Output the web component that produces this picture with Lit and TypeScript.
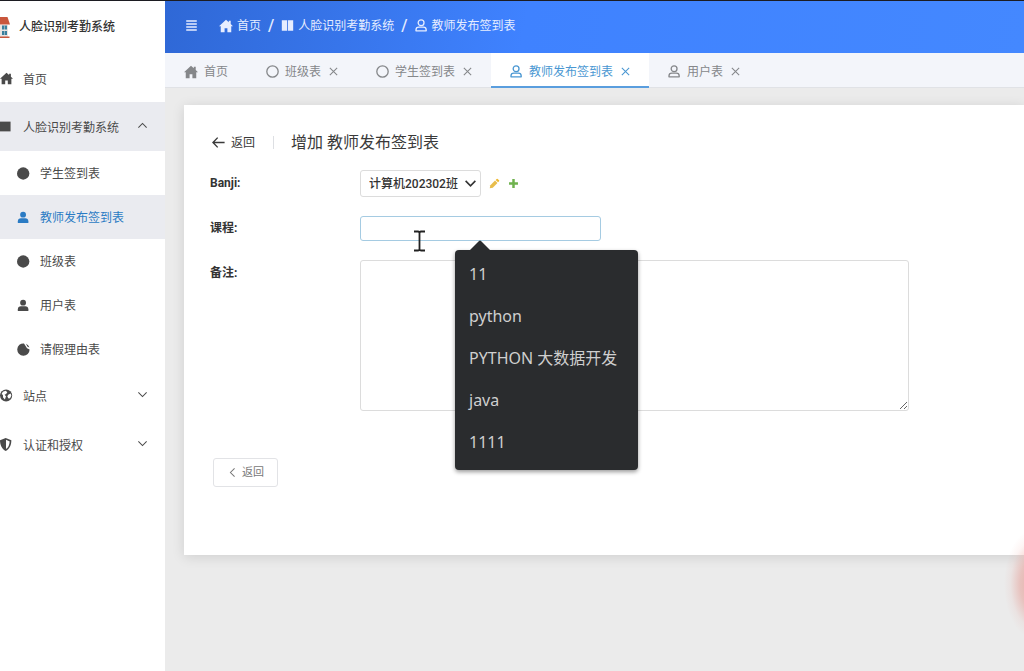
import { LitElement, html, css, svg } from "lit";
import { customElement, property, state } from "lit/decorators.js";
import { classMap } from "lit/directives/class-map.js";

const glyphs: Record<string, unknown> = {
  home: svg`<path d="M8 .8-.2 8.400H2V15.200h4.400v-4.600h3.200v4.600H14V8.400h2.200L13.400 5.800V2h-2.200v1.800z" fill="currentColor"/>`,
  square: svg`<path d="M0 2h13v12H0z" fill="currentColor"/>`,
  disc: svg`<circle cx="7.600" cy="8" r="7.600" fill="currentColor"/>`,
  ring: svg`<circle cx="8" cy="8" r="7" fill="none" stroke="currentColor" stroke-width="1.600"/>`,
  user: svg`<circle cx="7.500" cy="4.500" r="3.600" fill="currentColor"/><path d="M1 14.800v-2.200c0-2.100 1.600-3.600 3.800-3.600h5.400c2.200 0 3.800 1.500 3.800 3.600v2.200z" fill="currentColor"/>`,
  userLine: svg`<g fill="none" stroke="currentColor" stroke-width="1.600"><circle cx="7.500" cy="4.600" r="3.600"/><path d="M1.200 14.600v-1.200c0-2.100 1.500-3.400 3.500-3.400h5.600c2 0 3.500 1.300 3.500 3.400v1.200z" stroke-linejoin="round"/></g>`,
  cookie: svg`<path d="M8.600.5A7.600 7.600 0 1 0 15.500 8L12.300 6.500 11 4.300z" fill="currentColor"/><path d="M11 .8a8 8 0 0 1 4.300 4.600l-2.300-.7z" fill="currentColor"/>`,
  globe: svg`<circle cx="7.500" cy="8" r="7.500" fill="currentColor"/><path d="M3.500 3.500 7 2l2 2-1.500 2.200L5.600 7l1.800 1.800L6 13 3.800 10.600 3.600 7.500 2 6zM10 7l3-1.500 1 2.500-1.600 3.500-1.900.3L9 9.300z" fill="#fff"/>`,
  shield: svg`<path d="M7 0 0 2.800C0 8.800 2.500 13.500 7 16c4.500-2.500 7-7.200 7-13.200z" fill="currentColor"/><path d="M7.400 2.300v11.200c2.900-2 4.300-5.200 4.500-9.300z" fill="#fff"/>`,
  columns: svg`<path d="M1 1.500h6.500v13H1zM8.500 1.500H15v13H8.500z" fill="currentColor"/>`,
  menu: svg`<path d="M1.500 2.500h13M1.500 6.200h13M1.500 9.900h13M1.500 13.600h13" stroke="currentColor" stroke-width="1.700"/>`,
  close: svg`<path d="m1.500 1.500 13 13M14.500 1.500l-13 13" stroke="currentColor" stroke-width="1.900"/>`,
  up: svg`<path d="m2 11 6-6 6 6" fill="none" stroke="currentColor" stroke-width="1.500"/>`,
  down: svg`<path d="m2 5 6 6 6-6" fill="none" stroke="currentColor" stroke-width="1.500"/>`,
  select: svg`<path d="m2 4.800 6 6 6-6" fill="none" stroke="currentColor" stroke-width="2"/>`,
  prev: svg`<path d="m11 2-6 6 6 6" fill="none" stroke="currentColor" stroke-width="1.500"/>`,
  back: svg`<path d="M15.500 8H1.500M7 2 1.200 8 7 14" fill="none" stroke="currentColor" stroke-width="1.700"/>`,
  pencil: svg`<path d="m1 15 1-4.500 6.800-6.800 3.500 3.500L5.500 14z" fill="#e8bd4c"/><path d="m9.700 2.800 1.400-1.400q.8-.8 1.600 0l1.900 1.900q.8.800 0 1.600l-1.400 1.400z" fill="#efb930"/>`,
  plus: svg`<path d="M6.200 1.500h3.600v4.700h4.700v3.600H9.800v4.700H6.200V9.800H1.500V6.200h4.700z" fill="#6fb24e"/>`,
};

@customElement("ui-icon")
export class UiIcon extends LitElement {
  static styles = css`
    :host { display: block; flex: none; width: 13px; height: 13px; }
    svg { display: block; width: 100%; height: 100%; }
  `;
  @property() name = "home";
  render() {
    return html`<svg viewBox="0 0 16 16" aria-hidden="true">${glyphs[this.name]}</svg>`;
  }
}

@customElement("side-menu")
export class SideMenu extends LitElement {
  static styles = css`
    :host { display: block; background: #fff; color: #4a4a4a; overflow: hidden; }
    .brand { display: flex; align-items: center; gap: 9px; height: 52px; font-weight: 500; color: #333; }
    .logo { display: block; flex: none; width: 10px; height: 24px; }
    .item { display: flex; align-items: center; gap: 10px; height: 49px; box-sizing: border-box; padding-right: 17px; color: inherit; text-decoration: none; }
    .item.first { padding-top: 2px; }
    .item.open { background: #eaebf0; }
    .item.child { height: 44px; padding-left: 17px; }
    .item.current { background: #eaebf0; color: #2b7bc4; }
    .text { flex: 1; padding-top: 2px; white-space: nowrap; }
    .caret { width: 11px; height: 11px; margin-bottom: 2px; }
  `;
  private entries = [
    ["disc", "学生签到表"],
    ["user", "教师发布签到表"],
    ["disc", "班级表"],
    ["user", "用户表"],
    ["cookie", "请假理由表"],
  ];
  private row(icon: string, text: string, cls: Record<string, boolean> = {}, caret = "") {
    return html`<a href="#" class=${classMap({ item: true, ...cls })}>
      <ui-icon name=${icon}></ui-icon><span class="text">${text}</span>
      ${caret ? html`<ui-icon class="caret" name=${caret}></ui-icon>` : ""}
    </a>`;
  }
  render() {
    return html`
      <div class="brand">
        <svg class="logo" viewBox="0 0 10 24" aria-hidden="true">
          <path d="M0 10h8v12H0z" fill="#e9e4e1"/>
          <path d="M0 2h7.500l2.500 7.500H0z" fill="#c9563c"/>
          <path d="M2 10.500h5v4H2zM2 16h5v4H2z" fill="#3b7f9d"/>
          <path d="M4.500 10.500v10" stroke="#e9e4e1" stroke-width=".5"/>
          <path d="M0 21.500h9.500v1.500H0z" fill="#c9563c"/>
        </svg>
        <span>人脸识别考勤系统</span>
      </div>
      <nav>
        ${this.row("home", "首页", { first: true })}
        ${this.row("square", "人脸识别考勤系统", { open: true }, "up")}
        ${this.entries.map(([i, t]) => this.row(i, t, { child: true, current: t === "教师发布签到表" }))}
        ${this.row("globe", "站点", {}, "down")}
        ${this.row("shield", "认证和授权", {}, "down")}
      </nav>`;
  }
}

@customElement("tab-strip")
export class TabStrip extends LitElement {
  static styles = css`
    :host { display: flex; height: 35px; background: #f3f5fa; border-bottom: 1px solid #e0e2e6; box-sizing: border-box; color: #85878a; }
    .tab { display: flex; align-items: center; gap: 8px; padding: 2px 19px 0; height: 35px; box-sizing: border-box; white-space: nowrap; }
    .tab.current { background: #fff; color: #4a97d2; box-shadow: inset 0 -2px #5a9ede; }
    .name, .close { border: 0; padding: 0; background: none; font: inherit; color: inherit; display: flex; align-items: center; gap: 6px; }
    .name ui-icon[name="home"] { width: 14px; height: 14px; }
    .close ui-icon { width: 9px; height: 9px; }
  `;
  private tabs = [
    ["home", "首页"],
    ["ring", "班级表"],
    ["ring", "学生签到表"],
    ["userLine", "教师发布签到表"],
    ["userLine", "用户表"],
  ];
  @state() private current = 3;
  render() {
    return this.tabs.map(
      ([icon, text], i) => html`<div class=${classMap({ tab: true, current: i === this.current })}>
        <button class="name" @click=${() => (this.current = i)}><ui-icon name=${icon}></ui-icon>${text}</button>
        ${i ? html`<button class="close" aria-label="关闭"><ui-icon name="close"></ui-icon></button>` : ""}
      </div>`
    );
  }
}

@customElement("record-form")
export class RecordForm extends LitElement {
  static styles = css`
    :host { display: block; background: #fff; box-shadow: 0 2px 12px rgba(0, 0, 0, 0.12); padding: 24px 26px 68px; }
    .head { display: flex; align-items: center; height: 27px; color: #3a3a3a; }
    .back { display: flex; align-items: center; gap: 6px; padding: 0 18px 0 2px; border: 0; background: none; font: inherit; color: inherit; }
    .rule { width: 1px; height: 13px; background: #dddfe3; }
    .title { margin: 0 0 0 17px; font-size: 16px; font-weight: 400; line-height: 24px; }
    form { display: grid; gap: 18px; padding-top: 14px; }
    .row { display: grid; grid-template-columns: 150px minmax(0, 1fr); align-items: center; }
    .row.tall { align-items: start; }
    .label { font-weight: 700; line-height: 27px; color: #333; }
    .line { display: flex; align-items: center; gap: 8px; }
    .pick { display: grid; align-items: center; }
    .pick > * { grid-area: 1 / 1; }
    .pick ui-icon { justify-self: end; margin-right: 4px; pointer-events: none; color: #333; }
    select { appearance: none; width: 121px; height: 27px; padding: 0 18px 0 8px; border: 1px solid #dcdcdc; border-radius: 3px; background: #fff; font: inherit; font-weight: 500; color: #333; }
    .tool { border: 0; padding: 0; background: none; }
    .tool ui-icon { width: 11px; height: 11px; }
    .field { position: relative; width: 241px; max-width: 100%; height: 25px; }
    input { display: block; width: 100%; height: 25px; box-sizing: border-box; border: 1px solid #a5cbe2; border-radius: 3px; padding: 0 8px; font: inherit; outline: none; background: #fff; }
    textarea { display: block; width: 549px; max-width: 100%; height: 151px; box-sizing: border-box; border: 1px solid #dcdcdc; border-radius: 3px; padding: 6px 8px; font: inherit; background: #fff; }
    .menu { position: absolute; z-index: 2; left: 95px; top: 34px; width: 183px; box-sizing: border-box; margin: 0; padding: 3px 0 7px; list-style: none; border-radius: 4px; background: #2a2c2e; box-shadow: 0 2px 4px rgba(0, 0, 0, 0.4); color: #cfcfcf; font: 16px/42px "Noto Sans", "Noto Sans CJK SC", sans-serif; }
    .menu li { height: 42px; padding: 0 14px; white-space: nowrap; }
    .tip { position: absolute; left: 14px; top: -10px; width: 22px; height: 11px; }
    .caret { position: absolute; z-index: 3; left: 53px; top: 14px; width: 13px; height: 22px; }
    .actions { padding: 47px 3px 0; }
    .cancel { display: flex; align-items: center; justify-content: center; gap: 4px; width: 65px; height: 29px; border: 1px solid #e2e3e6; border-radius: 3px; background: #fff; color: #777; padding: 0; font: inherit; font-size: 11px; }
    .cancel ui-icon { width: 11px; height: 11px; }
  `;
  private history = ["11", "python", "PYTHON 大数据开发", "java", "1111"];
  render() {
    return html`
      <div class="head">
        <button class="back"><ui-icon name="back"></ui-icon>返回</button>
        <span class="rule"></span>
        <h1 class="title">增加 教师发布签到表</h1>
      </div>
      <form>
        <div class="row">
          <label class="label" for="banji">Banji:</label>
          <div class="line">
            <div class="pick">
              <select id="banji"><option>计算机202302班</option></select>
              <ui-icon name="select"></ui-icon>
            </div>
            <button type="button" class="tool" aria-label="修改"><ui-icon name="pencil"></ui-icon></button>
            <button type="button" class="tool" aria-label="增加"><ui-icon name="plus"></ui-icon></button>
          </div>
        </div>
        <div class="row">
          <label class="label" for="course">课程:</label>
          <div class="field">
            <input id="course" type="text" autocomplete="off" />
            <svg class="caret" viewBox="0 0 13 22" aria-hidden="true">
              <path d="M1 1.500h4q1.500 0 1.500 1.500 0-1.500 1.500-1.500h4M6.500 3v16M1 20.500h4q1.500 0 1.500-1.500 0 1.500 1.500 1.500h4" fill="none" stroke="#222" stroke-width="1.800"/>
            </svg>
            <ul class="menu" role="listbox" aria-label="课程">
              <svg class="tip" viewBox="0 0 22 11" aria-hidden="true"><path d="M0 11 10 1q1-1 2 0l10 10z" fill="#2a2c2e"/></svg>
              ${this.history.map((t) => html`<li role="option">${t}</li>`)}
            </ul>
          </div>
        </div>
        <div class="row tall">
          <label class="label" for="note">备注:</label>
          <textarea id="note"></textarea>
        </div>
      </form>
      <div class="actions"><button class="cancel"><ui-icon name="prev"></ui-icon>返回</button></div>`;
  }
}

@customElement("app-root")
export class AppRoot extends LitElement {
  static styles = css`
    :host { display: block; font: 12px/18px Roboto, "Noto Sans CJK SC", sans-serif; }
    .page { position: relative; display: grid; grid-template-columns: 165px minmax(0, 1fr); min-height: 100vh; box-sizing: border-box; border-top: 1px solid #1c1c22; background: #ebebeb; overflow: hidden; }
    .bar { display: flex; align-items: center; height: 52px; padding: 0 20px 3px; box-sizing: border-box; background: linear-gradient(100deg, #2f68d6, #3f82ff 42%, #4488ff); color: #e6edff; white-space: nowrap; }
    .toggle { border: 0; padding: 0; margin-right: 21px; background: none; color: inherit; }
    .crumbs { display: flex; align-items: center; gap: 7px; }
    .crumb { display: flex; align-items: center; gap: 4px; color: inherit; text-decoration: none; }
    .crumb ui-icon[name="home"] { width: 14px; height: 14px; }
    .slash { font-size: 16px; font-weight: 500; }
    .main { padding: 17px 0 24px 19px; }
    .glow { position: absolute; right: -44px; top: 527px; width: 64px; height: 112px; border-radius: 50%; background: radial-gradient(closest-side, rgba(222, 90, 75, 0.45), rgba(222, 90, 75, 0.28) 50%, rgba(222, 90, 75, 0.06) 80%, rgba(222, 90, 75, 0)); }
  `;
  render() {
    return html`
      <div class="page">
        <side-menu></side-menu>
        <div>
          <header class="bar">
            <button class="toggle" aria-label="菜单"><ui-icon name="menu"></ui-icon></button>
            <nav class="crumbs">
              <a class="crumb" href="#"><ui-icon name="home"></ui-icon>首页</a><span class="slash">/</span>
              <a class="crumb" href="#"><ui-icon name="columns"></ui-icon>人脸识别考勤系统</a><span class="slash">/</span>
              <a class="crumb" href="#"><ui-icon name="userLine"></ui-icon>教师发布签到表</a>
            </nav>
          </header>
          <tab-strip></tab-strip>
          <main class="main"><record-form></record-form></main>
        </div>
        <div class="glow"></div>
      </div>`;
  }
}
